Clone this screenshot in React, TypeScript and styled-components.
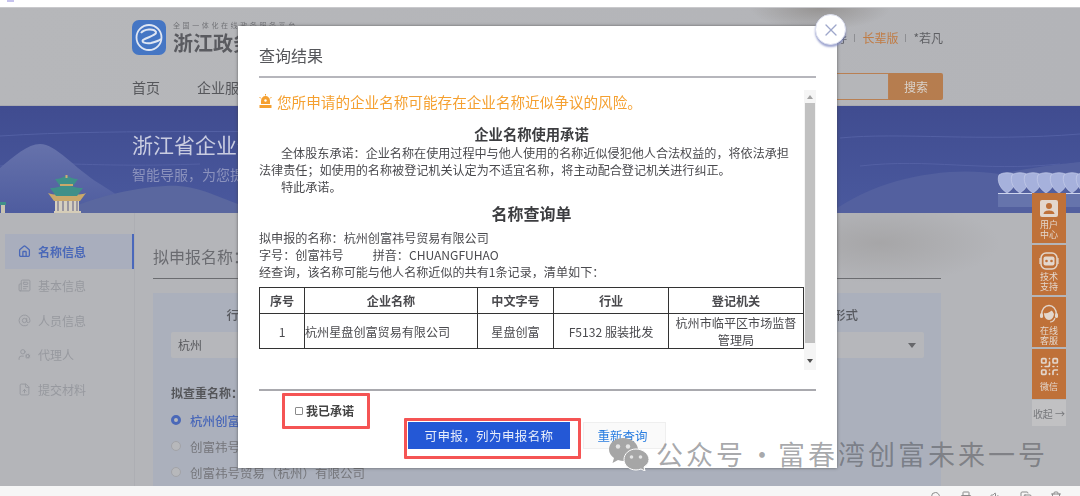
import styled, { createGlobalStyle } from "styled-components";
import { FileUp, House, Newspaper, QrCode, AtSign, UserCog, X, Printer, Trash2, Volume1, Copy, Search } from "lucide-react";

const GlobalStyle = createGlobalStyle`
  html, body {
    margin: 0;
    padding: 0;
    width: 1080px;
    height: 496px;
    overflow: hidden;
    background: #fff;
    font-family: "Noto Sans CJK SC", "Noto Sans", sans-serif;
  }
  * {
    box-sizing: border-box;
  }
`;

const UserTile = () => (
  <svg width="18" height="18" viewBox="0 0 18 18">
    <rect width="18" height="17" rx="2" fill="#e3d7cd" />
    <circle cx="9" cy="6" r="3" fill="#bf7139" />
    <path d="M3.500 14 C4 11 6.500 10.500 9 10.500 C11.500 10.500 14 11 14.500 14 Z" fill="#bf7139" />
  </svg>
);

const RobotTile = () => (
  <svg width="20" height="18" viewBox="0 0 20 18">
    <rect x="2" y="1" width="16" height="16" rx="5" fill="none" stroke="#e3d7cd" strokeWidth="1.500" />
    <rect x="4.500" y="4.500" width="11" height="9" rx="2" fill="#e3d7cd" />
    <circle cx="7.500" cy="9" r="1.300" fill="#bf7139" />
    <circle cx="12.500" cy="9" r="1.300" fill="#bf7139" />
    <path d="M1 6 V12 M19 6 V12" stroke="#e3d7cd" strokeWidth="1.200" />
  </svg>
);

const AgentTile = () => (
  <svg width="20" height="20" viewBox="0 0 20 20">
    <path d="M2.500 11 C2.500 5 6 1.500 10 1.500 C14 1.500 17.500 5 17.500 11" fill="none" stroke="#e3d7cd" strokeWidth="1.300" />
    <rect x="1" y="9" width="3" height="5" rx="1.500" fill="#e3d7cd" />
    <rect x="16" y="9" width="3" height="5" rx="1.500" fill="#e3d7cd" />
    <path d="M5 9 C7 5 13 5 15 9 C15 13 13 16 10 16 C7 16 5 13 5 9 Z" fill="#e3d7cd" />
    <path d="M5 9 C8 10 11 8 13 6 L15 10 L15 5 L6 5 Z" fill="#bf7139" />
    <path d="M16 14 C15 17 13 18 11 18" fill="none" stroke="#e3d7cd" strokeWidth="1.100" />
  </svg>
);

const WechatTile = () => <QrCode size={21} strokeWidth={1.900} />;

const sideItems = [
  { label: "名称信息", Icon: House, active: true },
  { label: "基本信息", Icon: Newspaper },
  { label: "人员信息", Icon: AtSign },
  { label: "代理人", Icon: UserCog },
  { label: "提交材料", Icon: FileUp },
];

const tools = [
  { label: "用户中心", Icon: UserTile },
  { label: "技术支持", Icon: RobotTile },
  { label: "在线客服", Icon: AgentTile },
  { label: "微信", Icon: WechatTile },
];

const radios = ["杭州创富", "创富祎号", "创富祎号贸易（杭州）有限公司"];

const petals = [998, 1011, 1024, 1037, 1050, 1063, 1076];

const App = () => {
  return (
    <Shell>
      <GlobalStyle />
      <TopBar>
        <TabMark />
      </TopBar>
      <Page>
        <Header>
          <BrandRow>
            <Brand>
              <svg width="34" height="35" viewBox="0 0 34 35">
                <rect width="34" height="35" rx="7" fill="#4576c4" />
                <circle cx="17" cy="17.500" r="12.500" fill="none" stroke="#dfe6f3" strokeWidth="1.800" />
                <path d="M9 13 C12 9 22 8 24 12 C25 15 16 17 11 20 C9 22 14 24 19 23 C23 22 27 21 29 19" fill="none" stroke="#dfe6f3" strokeWidth="2" />
              </svg>
              <BrandText>
                <BrandSmall>全国一体化在线政务服务平台</BrandSmall>
                <BrandName>浙江政务</BrandName>
              </BrandText>
            </Brand>
            <UserLinks>
              <span>导</span>
              <LinkSep />
              <ElderLink>长辈版</ElderLink>
              <LinkSep />
              <span>*若凡</span>
            </UserLinks>
          </BrandRow>
          <NavRow>
            <NavLinks>
              <span>首页</span>
              <span>企业服务</span>
            </NavLinks>
            <SearchBox>
              <SearchField />
              <SearchButton>搜索</SearchButton>
            </SearchBox>
          </NavRow>
        </Header>
        <Banner>
          <BannerArt width="1080" height="107" viewBox="0 0 1080 107">
            <defs>
              <linearGradient id="hill" x1="0" y1="0" x2="0" y2="1">
                <stop offset="0" stopColor="#6672ab" />
                <stop offset="1" stopColor="#4e5c9f" />
              </linearGradient>
            </defs>
            <path d="M0 30 C120 22 300 28 420 24 M840 32 C900 26 980 36 1080 28 M0 60 C60 54 90 62 200 58 M860 60 C930 52 980 66 1060 58" fill="none" stroke="#5360a4" strokeWidth="1" />
            <path d="M0 62 C14 50 28 38 40 38 C56 38 74 62 100 78 C120 90 130 100 140 107 L0 107 Z" fill="url(#hill)" />
            <path d="M60 107 C90 92 130 82 165 80 C195 78 215 90 238 98 L238 107 Z" fill="#5a679f" />
            <rect x="55" y="95" width="24" height="12" fill="#d6d0c0" />
            <path d="M58 95 V106 M63 95 V106 M68 95 V106 M73 95 V106 M77 95 V106" stroke="#7a7890" strokeWidth="1.300" />
            <rect x="54" y="105" width="27" height="2" fill="#d6cdb8" />
            <path d="M48 87 C54 90 60 88 66 84 C72 88 79 90 86 87 L80 95 L54 95 Z" fill="#c9a86a" />
            <path d="M50 82 C57 82 62 80 66 77 C70 80 76 82 83 82 L77 90 L56 90 Z" fill="#3f9089" />
            <path d="M55 73 C60 73 64 71 66 69 C69 71 73 73 78 73 L73 80 L60 80 Z" fill="#3f9089" />
            <rect x="60" y="78" width="13" height="2" fill="#c9a86a" />
            <path d="M65.500 69 H67.500 V72 H65.500 Z" fill="#d0a878" />
            <rect x="0" y="96" width="6" height="3" fill="#3f9089" />
            <rect x="1" y="99" width="4" height="8" fill="#c9c4b0" />
            <path d="M830 107 C880 70 950 60 1000 68 C1040 60 1060 58 1080 56 L1080 107 Z" fill="#53609f" />
            {petals.map((x) => (
              <path key={x} d={`M${x + 9} 87 C${x + 1} 82 ${x - 1} 74 ${x + 1} 69 C${x + 5} 66 ${x + 13} 66 ${x + 17} 69 C${x + 19} 74 ${x + 17} 82 ${x + 9} 87 Z`} fill="#a6b1dc" stroke="#c6cdea" strokeWidth="0.700" />
            ))}
            <rect x="998" y="87" width="82" height="1" fill="#cdd4ec" />
            <rect x="998" y="88" width="82" height="13" fill="#6674ac" />
          </BannerArt>
          <BannerTitle>浙江省企业登</BannerTitle>
          <BannerSub>智能导服，为您提</BannerSub>
        </Banner>
        <Body>
          <Sidebar>
            {sideItems.map(({ label, Icon, active }) => (
              <SideItem key={label} $active={active}>
                <Icon size={13} strokeWidth={active ? 2.400 : 1.800} />
                {label}
              </SideItem>
            ))}
          </Sidebar>
          <Main>
            <MainTitle>拟申报名称：</MainTitle>
            <FormPanel>
              <FormGrid>
                <FieldLabel>行政</FieldLabel>
                <span />
                <FieldLabel>组织形式</FieldLabel>
                <SelectBox>杭州</SelectBox>
                <span />
                <SelectBox>
                  <SelectArrow />
                </SelectBox>
              </FormGrid>
              <CheckTitle>拟查重名称：</CheckTitle>
              {radios.map((name, i) => (
                <RadioRow key={name} $active={i === 0}>
                  <RadioDot $active={i === 0} />
                  {name}
                </RadioRow>
              ))}
            </FormPanel>
          </Main>
        </Body>
        <ToolRail>
          {tools.map(({ label, Icon }) => (
            <ToolItem key={label}>
              <Icon />
              <ToolText $single={label.length === 2}>{label}</ToolText>
            </ToolItem>
          ))}
          <FoldItem>收起 →</FoldItem>
        </ToolRail>
      </Page>
      <BottomBar>
        <Search size={12} />
        <Printer size={12} />
        <Volume1 size={12} />
        <Copy size={12} />
        <Trash2 size={12} />
      </BottomBar>

      <Modal>
        <CloseButton>
          <X size={20} strokeWidth={1.600} />
        </CloseButton>
        <ModalTitle>查询结果</ModalTitle>
        <ModalRule />
        <ScrollArea>
          <ScrollBody>
            <Warning>
              <svg width="13" height="15" viewBox="0 0 13 15">
                <path d="M2 10 V7 C2 4 4 2 6.500 2 C9 2 11 4 11 7 V10 Z" fill="#f5a030" />
                <rect x="0.500" y="11" width="12" height="3" fill="#f5a030" />
                <circle cx="6.500" cy="6.500" r="1.200" fill="#fff" />
                <path d="M0.500 3 L2 4.500 M12.500 3 L11 4.500 M6.500 0 V1.500" stroke="#f5a030" strokeWidth="1" />
              </svg>
              您所申请的企业名称可能存在企业名称近似争议的风险。
            </Warning>
            <DocHeading>企业名称使用承诺</DocHeading>
            <DocPara>全体股东承诺：企业名称在使用过程中与他人使用的名称近似侵犯他人合法权益的，将依法承担法律责任；如使用的名称被登记机关认定为不适宜名称，将主动配合登记机关进行纠正。</DocPara>
            <DocPara>特此承诺。</DocPara>
            <QueryHeading>名称查询单</QueryHeading>
            <QueryInfo>
              <div>拟申报的名称：杭州创富祎号贸易有限公司</div>
              <div>
                字号：创富祎号<PinyinGap />拼音：CHUANGFUHAO
              </div>
              <div>经查询，该名称可能与他人名称近似的共有1条记录，清单如下：</div>
            </QueryInfo>
            <ResultTable>
              <colgroup>
                <col width="45" />
                <col width="173" />
                <col width="76" />
                <col width="115" />
                <col width="135" />
              </colgroup>
              <thead>
                <tr>
                  <th>序号</th>
                  <th>企业名称</th>
                  <th>中文字号</th>
                  <th>行业</th>
                  <th>登记机关</th>
                </tr>
              </thead>
              <tbody>
                <tr>
                  <td>1</td>
                  <NameCell>杭州星盘创富贸易有限公司</NameCell>
                  <td>星盘创富</td>
                  <td>F5132 服装批发</td>
                  <td>杭州市临平区市场监督管理局</td>
                </tr>
              </tbody>
            </ResultTable>
          </ScrollBody>
          <ScrollTrack>
            <ArrowUp />
            <ScrollThumb />
            <ArrowDown />
          </ScrollTrack>
        </ScrollArea>
        <FooterRule />
        <ModalFooter>
          <CommitBox>
            <CommitCheck type="checkbox" readOnly />
            我已承诺
          </CommitBox>
          <ActionWrap>
            <ActionBox>
              <PrimaryButton>可申报，列为申报名称</PrimaryButton>
            </ActionBox>
            <GhostButton>重新查询</GhostButton>
          </ActionWrap>
        </ModalFooter>
      </Modal>

      <Watermark>
        <svg width="42" height="34" viewBox="0 0 42 34">
          <path d="M15 1 C7 1 1 6 1 12.500 C1 16 3 19 6 21 L4.500 26 L10 23 C12 23.600 14 24 16 24 C24 24 30 19 30 12.500 C30 6 23 1 15 1 Z" fill="#a6a6a6" />
          <circle cx="10" cy="9.500" r="2.200" fill="#e4e4e4" />
          <circle cx="20" cy="9.500" r="2.200" fill="#e4e4e4" />
          <path d="M28 12 C21 12 16 17 16 22.500 C16 28 21 33 28 33 C30 33 31 32.600 33 32 L37 34 L36 30 C39 28 41 25.500 41 22.500 C41 17 35 12 28 12 Z" fill="#a6a6a6" stroke="#fff" strokeWidth="1" />
          <circle cx="23.500" cy="20" r="1.800" fill="#e4e4e4" />
          <circle cx="32.500" cy="20" r="1.800" fill="#e4e4e4" />
        </svg>
        <WatermarkText>
          公众号<WatermarkDot>·</WatermarkDot>富春湾创富未来一号
        </WatermarkText>
      </Watermark>
    </Shell>
  );
};

export default App;

const Shell = styled.div`
  position: relative;
  width: 1080px;
  height: 496px;
  overflow: hidden;
  display: flex;
  flex-direction: column;
`;

const TopBar = styled.div`
  height: 7px;
  background: #fff;
  padding-left: 7px;
`;

const TabMark = styled.div`
  width: 7px;
  height: 2px;
  background: #c6c3ee;
`;

const Page = styled.div`
  position: relative;
  height: 479px;
  background: #b4b5b9;
  border-top: 1px solid #c9c9cc;
  filter: blur(0.6px);
`;

const Header = styled.header`
  height: 98px;
  padding: 12px 137px 0 132px;
  background:
    radial-gradient(ellipse 70px 22px at 820px 0, rgba(125, 120, 115, 0.55), transparent),
    linear-gradient(90deg, #b6b7ba, #b3b4b8);
  border-bottom: 1px solid #a9aab0;
`;

const BrandRow = styled.div`
  display: flex;
  align-items: center;
  justify-content: space-between;
  height: 35px;
`;

const Brand = styled.div`
  display: flex;
  align-items: center;
  gap: 7px;
`;

const BrandText = styled.div`
  display: flex;
  flex-direction: column;
`;

const BrandSmall = styled.div`
  font-size: 7px;
  line-height: 10px;
  letter-spacing: 2.600px;
  color: #727377;
`;

const BrandName = styled.div`
  font-family: "Noto Sans CJK SC", sans-serif;
  font-weight: 700;
  font-size: 20px;
  line-height: 25px;
  color: #5a5b60;
`;

const UserLinks = styled.div`
  display: flex;
  align-items: center;
  gap: 7px;
  font-size: 12px;
  color: #5e5f63;
`;

const LinkSep = styled.i`
  width: 1px;
  height: 8px;
  background: #8d8e92;
`;

const ElderLink = styled.span`
  color: #c07c45;
`;

const NavRow = styled.div`
  display: flex;
  align-items: center;
  justify-content: space-between;
  height: 27px;
  margin-top: 18px;
`;

const NavLinks = styled.nav`
  display: flex;
  gap: 37px;
  font-size: 14px;
  color: #56575b;
`;

const SearchBox = styled.div`
  display: flex;
  height: 27px;
`;

const SearchField = styled.div`
  width: 100px;
  border: 1px solid #b98053;
  background: #b5b6b9;
`;

const SearchButton = styled.div`
  width: 54px;
  display: flex;
  align-items: center;
  justify-content: center;
  background: #b67d4f;
  border-radius: 0 2px 2px 0;
  font-size: 12px;
  color: #d9d2cb;
`;

const Banner = styled.section`
  position: relative;
  height: 107px;
  padding: 25px 0 0 132px;
  overflow: hidden;
  background: linear-gradient(180deg, #404c90, #4a599e);
`;

const BannerArt = styled.svg`
  position: absolute;
  left: 0;
  top: 0;
`;

const BannerTitle = styled.h1`
  position: relative;
  margin: 0;
  font-size: 21px;
  line-height: 26px;
  font-weight: 400;
  color: #c9cce0;
`;

const BannerSub = styled.p`
  position: relative;
  margin: 7px 0 0;
  font-size: 14px;
  line-height: 20px;
  color: #8b92bd;
`;

const Body = styled.div`
  display: flex;
  height: 273px;
  background: radial-gradient(ellipse 120px 40px at 880px 30px, rgba(125, 120, 115, 0.25), transparent);
`;

const Sidebar = styled.aside`
  width: 135px;
  padding: 21px 0 0 5px;
  border-right: 1px solid #adaeb3;
`;

const SideItem = styled.div<{ $active?: boolean }>`
  display: flex;
  align-items: center;
  gap: 7px;
  width: 129px;
  height: 34.500px;
  padding-left: 13px;
  font-size: 12px;
  font-weight: ${({ $active }) => ($active ? 700 : 400)};
  color: ${({ $active }) => ($active ? "#4a68b8" : "#97999f")};
  background: ${({ $active }) => ($active ? "#a9aebd" : "transparent")};
  border-right: 2px solid ${({ $active }) => ($active ? "#4a68bb" : "transparent")};
`;

const Main = styled.main`
  width: 788px;
  margin-left: 18px;
`;

const MainTitle = styled.h2`
  height: 66px;
  margin: 0;
  padding-top: 31px;
  font-size: 16px;
  line-height: 24px;
  font-weight: 400;
  color: #6a6b70;
  border-bottom: 1px solid #6b6c70;
`;

const FormPanel = styled.div`
  height: 193px;
  margin-top: 14px;
  padding: 13px 17px 0 18px;
  overflow: hidden;
  background: #abb0bc;
`;

const FormGrid = styled.div`
  display: grid;
  grid-template-columns: 136px 1fr 182px;
  row-gap: 8px;
`;

const FieldLabel = styled.div`
  text-align: center;
  font-size: 12.500px;
  line-height: 18px;
  font-weight: 500;
  color: #585a60;
`;

const SelectBox = styled.div`
  position: relative;
  height: 26px;
  padding-left: 7px;
  font-size: 12px;
  line-height: 26px;
  color: #56575b;
  background: #b6b7bb;
  border-radius: 2px;
`;

const SelectArrow = styled.i`
  position: absolute;
  right: 8px;
  top: 11px;
  border: 4px solid transparent;
  border-top: 5px solid #66676b;
`;

const CheckTitle = styled.div`
  margin-top: 26px;
  font-size: 12px;
  line-height: 18px;
  font-weight: 700;
  color: #55565a;
`;

const RadioRow = styled.div<{ $active?: boolean }>`
  display: flex;
  align-items: center;
  gap: 9px;
  height: 26px;
  margin-top: ${({ $active }) => ($active ? "5px" : "0")};
  font-size: 12.500px;
  font-weight: ${({ $active }) => ($active ? 500 : 400)};
  color: ${({ $active }) => ($active ? "#4a68b8" : "#75767b")};
  white-space: nowrap;
`;

const RadioDot = styled.i<{ $active?: boolean }>`
  width: 10px;
  height: 10px;
  border-radius: 50%;
  background: #b7b8bb;
  border: ${({ $active }) => ($active ? "3px solid #4a68b8" : "1px solid #a2a3a8")};
`;

const ToolRail = styled.div`
  position: absolute;
  left: 1032px;
  top: 185px;
  width: 34px;
  display: flex;
  flex-direction: column;
  gap: 2px;
`;

const ToolItem = styled.div`
  height: 50px;
  display: flex;
  flex-direction: column;
  align-items: center;
  padding-top: 7px;
  background: #bf7139;
  color: #e3d7cd;
`;

const ToolText = styled.div<{ $single?: boolean }>`
  width: 18px;
  margin-top: ${({ $single }) => ($single ? "5px" : "2px")};
  font-size: 9px;
  line-height: 10px;
  text-align: center;
`;

const FoldItem = styled.div`
  height: 26px;
  margin-top: -1px;
  display: flex;
  align-items: center;
  justify-content: center;
  font-size: 10px;
  color: #77787c;
  background: #c1c1c3;
  white-space: nowrap;
`;

const BottomBar = styled.footer`
  height: 10px;
  padding: 5px 18px 0 0;
  display: flex;
  justify-content: flex-end;
  gap: 18px;
  overflow: hidden;
  background: #f6f6f6;
  color: #8b8b8b;
`;

const Modal = styled.div`
  position: absolute;
  left: 238px;
  top: 26px;
  width: 599px;
  height: 442px;
  padding: 0 21px;
  background: #fff;
  box-shadow: 0 0 3px rgba(60, 60, 60, 0.7);
  color: #444;
  filter: blur(0.25px);
`;

const CloseButton = styled.div`
  position: absolute;
  right: -9px;
  top: -12px;
  width: 31px;
  height: 31px;
  display: flex;
  align-items: center;
  justify-content: center;
  border-radius: 50%;
  background: #fff;
  color: #9ea7cb;
  border: 1px solid #dcdfee;
  box-shadow: 0 2px 2px rgba(120, 130, 190, 0.7);
`;

const ModalTitle = styled.div`
  padding-top: 17px;
  font-size: 16px;
  line-height: 24px;
  color: #55565a;
`;

const ModalRule = styled.div`
  height: 2px;
  margin-top: 9px;
  background: #b6b6bc;
`;

const ScrollArea = styled.div`
  display: flex;
  height: 280px;
  margin-top: 12px;
`;

const ScrollBody = styled.div`
  width: 545px;
`;

const Warning = styled.div`
  display: flex;
  align-items: center;
  gap: 5px;
  height: 22px;
  font-size: 14.600px;
  color: #f5a030;
`;

const DocHeading = styled.div`
  margin-top: 12px;
  text-align: center;
  font-size: 14.300px;
  line-height: 20px;
  font-weight: 700;
  color: #3c3d40;
`;

const DocPara = styled.p`
  max-width: 535px;
  margin: 0;
  font-size: 12.100px;
  line-height: 17px;
  text-indent: 22px;
  color: #4a4a4e;
`;

const QueryHeading = styled.div`
  margin-top: 7px;
  text-align: center;
  font-size: 16px;
  line-height: 22px;
  font-weight: 700;
  color: #3c3d40;
`;

const QueryInfo = styled.div`
  margin-top: 5px;
  font-size: 12.100px;
  line-height: 17px;
  color: #4a4a4e;
`;

const PinyinGap = styled.span`
  display: inline-block;
  width: 29px;
`;

const ResultTable = styled.table`
  width: 544px;
  margin-top: 7px;
  border-collapse: collapse;
  table-layout: fixed;
  font-size: 12.100px;
  line-height: 17px;
  color: #4a4a4e;

  th,
  td {
    border: 1px solid #333;
    padding: 0;
    text-align: center;
  }

  th {
    height: 26px;
    font-weight: 700;
  }

  td {
    height: 35px;
    padding: 0 5px;
  }
`;

const NameCell = styled.td`
  && {
    padding: 0;
    text-align: left;
  }
`;

const ScrollTrack = styled.div`
  width: 12px;
  display: flex;
  flex-direction: column;
  align-items: center;
  background: #f5f5f5;
`;

const ScrollThumb = styled.div`
  width: 10px;
  height: 240px;
  margin-top: 4px;
  background: #c1c1c1;
`;

const ArrowUp = styled.i`
  margin-top: 5px;
  border: 3px solid transparent;
  border-top: 0;
  border-bottom: 4px solid #a3a3a3;
`;

const ArrowDown = styled.i`
  margin-top: 16px;
  border: 3px solid transparent;
  border-bottom: 0;
  border-top: 4px solid #505050;
`;

const FooterRule = styled.div`
  height: 1.500px;
  margin-top: 19px;
  background: #a9a9ae;
`;

const ModalFooter = styled.div`
  display: flex;
  align-items: flex-start;
  padding-left: 23px;
`;

const CommitBox = styled.label`
  display: flex;
  align-items: center;
  gap: 3px;
  width: 88px;
  height: 36px;
  margin-top: 2px;
  padding-left: 10px;
  font-size: 12px;
  font-weight: 700;
  color: #444;
  border: 3px solid #f55454;
  border-radius: 1px;
`;

const CommitCheck = styled.input`
  appearance: none;
  width: 8px;
  height: 8px;
  margin: 0;
  background: #fff;
  border: 1px solid #8a8a8a;
  border-radius: 1px;
`;

const ActionWrap = styled.div`
  display: flex;
  align-items: flex-start;
  margin: 27px 0 0 34px;
`;

const ActionBox = styled.div`
  width: 177px;
  height: 41px;
  padding: 1px 0 0 1px;
  border: 3px solid #f55454;
  border-radius: 1px;
`;

const PrimaryButton = styled.div`
  width: 162px;
  height: 27px;
  display: flex;
  align-items: center;
  justify-content: center;
  background: #2458d6;
  font-size: 12.500px;
  letter-spacing: 0.400px;
  color: #e6ecfa;
`;

const GhostButton = styled.div`
  width: 83px;
  height: 27px;
  margin: 4px 0 0 2px;
  padding-right: 4px;
  display: flex;
  align-items: center;
  justify-content: center;
  background: #fafafa;
  border: 1px solid #efefef;
  font-size: 12.500px;
  color: #2a7ee0;
`;

const Watermark = styled.div`
  position: absolute;
  left: 608px;
  top: 437px;
  display: flex;
  align-items: center;
  gap: 6px;
`;

const WatermarkText = styled.div`
  font-size: 27px;
  line-height: 34px;
  letter-spacing: 3px;
  color: rgba(70, 72, 78, 0.47);
  white-space: nowrap;
`;

const WatermarkDot = styled.span`
  display: inline-block;
  width: 32px;
  text-align: center;
  letter-spacing: 0;
`;
